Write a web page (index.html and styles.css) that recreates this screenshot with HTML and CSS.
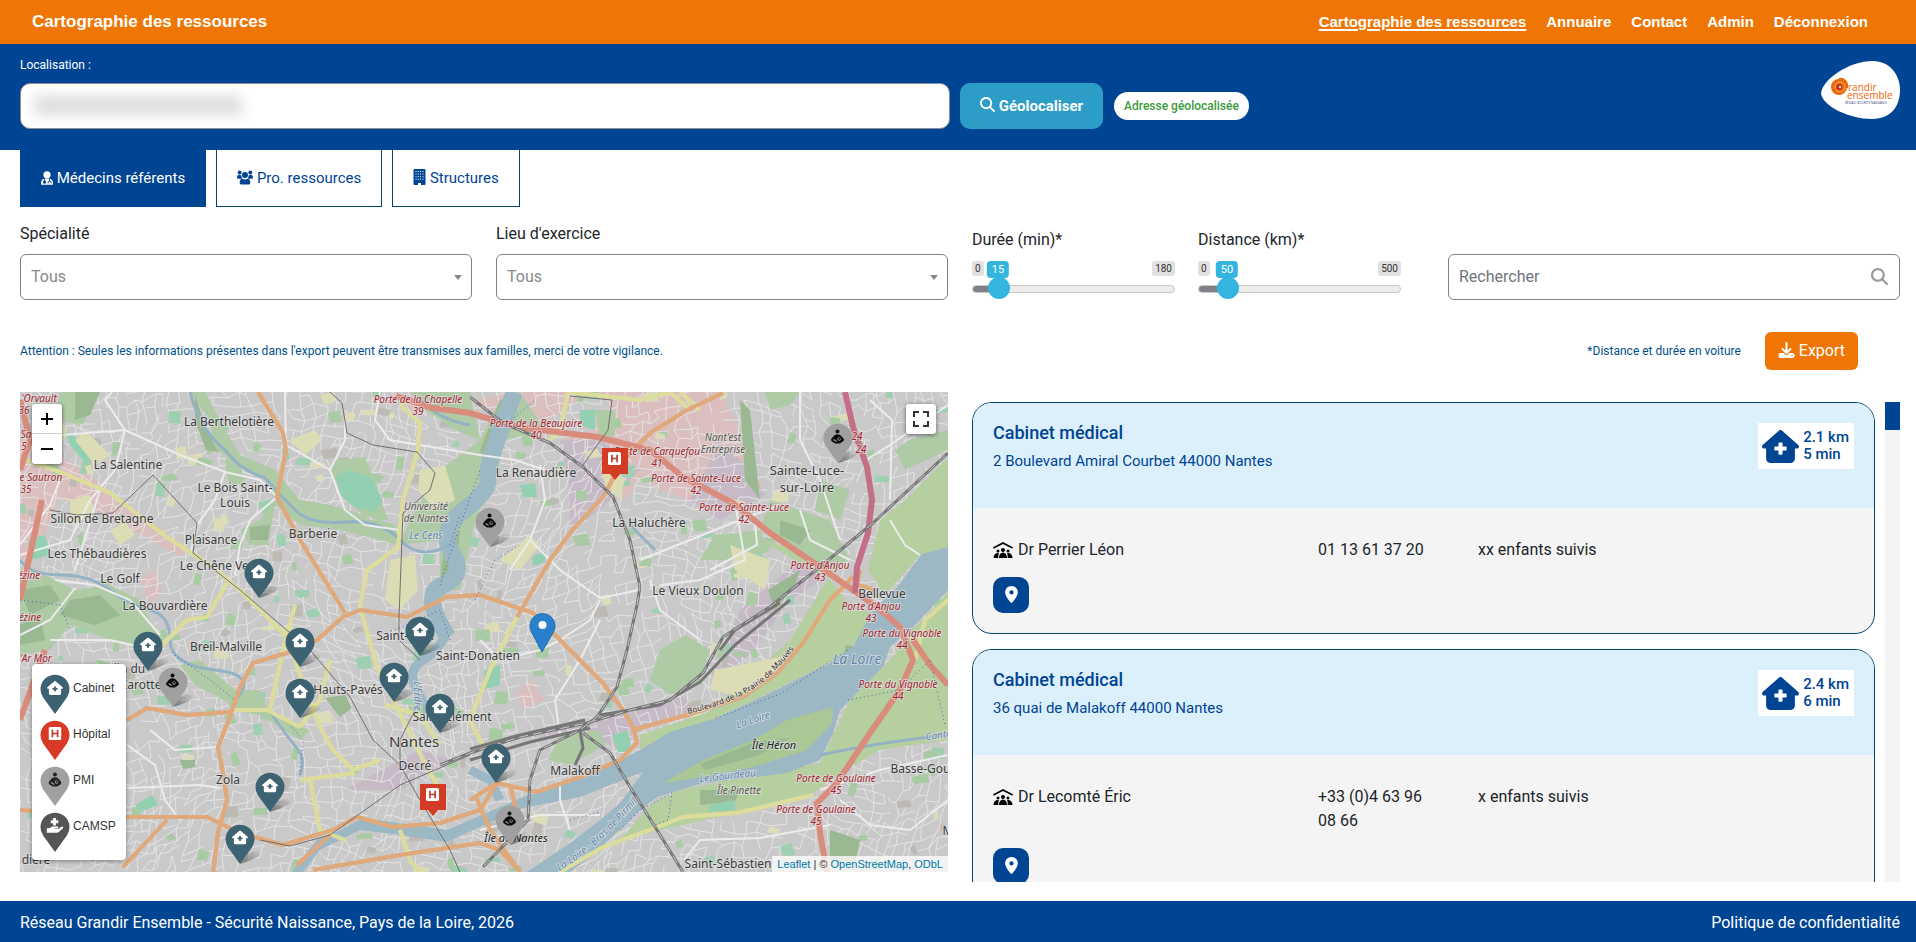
FILE: index.html
```html
<!DOCTYPE html>
<html lang="fr">
<head>
<meta charset="utf-8">
<title>Cartographie des ressources</title>
<link rel="stylesheet" href="styles.css">
</head>
<body>
<svg class="sprite" width="0" height="0" aria-hidden="true">
  <symbol id="i-search" viewBox="0 0 512 512"><path d="M416 208c0 45.900-14.900 88.300-40 122.700L502.600 457.400c12.500 12.500 12.500 32.800 0 45.300s-32.800 12.500-45.300 0L330.700 376c-34.400 25.200-76.800 40-122.700 40C93.100 416 0 322.900 0 208S93.100 0 208 0S416 93.100 416 208zM208 352a144 144 0 1 0 0-288 144 144 0 1 0 0 288z"/></symbol>
  <symbol id="i-pin" viewBox="0 0 384 512"><path d="M215.700 499.200C267 435 384 279.400 384 192C384 86 298 0 192 0S0 86 0 192c0 87.400 117 243 168.300 307.200c12.300 15.300 35.100 15.300 47.400 0zM192 128a64 64 0 1 1 0 128 64 64 0 1 1 0-128z"/></symbol>
  <symbol id="i-download" viewBox="0 0 512 512"><path d="M288 32c0-17.700-14.300-32-32-32s-32 14.300-32 32V274.700l-73.400-73.400c-12.500-12.500-32.800-12.500-45.300 0s-12.500 32.800 0 45.300l128 128c12.500 12.500 32.800 12.500 45.300 0l128-128c12.500-12.500 12.500-32.800 0-45.300s-32.800-12.500-45.300 0L288 274.700V32zM64 352c-35.300 0-64 28.700-64 64v32c0 35.300 28.700 64 64 64H448c35.300 0 64-28.700 64-64V416c0-35.300-28.700-64-64-64H346.500l-45.300 45.300c-25 25-65.500 25-90.500 0L165.500 352H64zm368 56a24 24 0 1 1 0 48 24 24 0 1 1 0-48z"/></symbol>
  <symbol id="i-house" viewBox="0 0 576 512"><path d="M543.800 287.600c17 0 32-14 32-32.100c1-9-3-17-11-24L309.500 7c-6-5-14-7-21-7s-15 1-22 8L10 231.500c-7 7-10 15-10 24c0 18 14 32.100 32 32.100h32V448c0 35.300 28.700 64 64 64H448.500c35.500 0 64.200-28.800 64-64.300l-.7-160.200h32zM256 208c0-8.800 7.200-16 16-16h32c8.800 0 16 7.200 16 16v48h48c8.800 0 16 7.200 16 16v32c0 8.800-7.200 16-16 16H320v48c0 8.800-7.200 16-16 16H272c-8.800 0-16-7.200-16-16V320H208c-8.800 0-16-7.200-16-16V272c0-8.800 7.200-16 16-16h48V208z"/></symbol>
  <symbol id="i-doctor" viewBox="0 0 14 16"><path fill-rule="evenodd" d="M7 0a4 4 0 1 1 0 8.400a4 4 0 0 1 0-8.400zM3.600 8.800V11A1.800 1.800 0 0 0 2.400 13a1.800 1.800 0 0 0 3.600 0A1.800 1.800 0 0 0 4.600 11V8.600h5v2.600l-1.800 1.600v1.700h.9v-1.300l1.300-1.200 1.300 1.200v1.300h.9v-1.700l-1.700-1.600V8.800c2.200.5 3.500 2.400 3.500 4.700V15a1 1 0 0 1-1 1H1a1 1 0 0 1-1-1v-1.500c0-2.300 1.400-4.200 3.600-4.700z"/></symbol>
  <symbol id="i-users" viewBox="0 0 18 16"><circle cx="3" cy="2.400" r="2.200"/><circle cx="15" cy="2.400" r="2.200"/><circle cx="9" cy="5.200" r="3.400"/><path d="M0 8C0 6.200 1 5 2.500 5c1 0 1.800.3 2.500 1A4.800 4.800 0 0 0 6 9L5 9.400H1.600C.6 9.400 0 9 0 8zM18 8c0-1.800-1-3-2.500-3-1 0-1.800.3-2.500 1A4.800 4.800 0 0 1 12 9l1 .4h3.400c1 0 1.600-.4 1.600-1.400zM3 13.500c0-2.600 1.200-4.200 3-4.200 2 1.200 4 1.200 6 0 1.800 0 3 1.600 3 4.200C15 15 14 16 12.700 16H5.300C4 16 3 15 3 13.500z"/></symbol>
  <symbol id="i-building" viewBox="0 0 12 16"><path fill-rule="evenodd" d="M1 0h10A1 1 0 0 1 12 1v14a1 1 0 0 1-1 1H7.500v-2h-3V16H1A1 1 0 0 1 0 15V1A1 1 0 0 1 1 0zM2 2v1h1V2zm2.300 0v1h1V2zm2.300 0v1h1V2zM9 2v1h1V2zM2 4.600v1h1v-1zm2.300 0v1h1v-1zm2.300 0v1h1v-1zM9 4.600v1h1v-1zM2 7.200v1h1v-1zm2.300 0v1h1v-1zm2.300 0v1h1v-1zM9 7.200v1h1v-1zM2 9.800v1h1v-1zm2.300 0v1h1v-1zm2.300 0v1h1v-1zM9 9.800v1h1v-1z"/></symbol>
  <symbol id="i-roof" viewBox="0 0 20 16"><path d="M10 0L0 5.200l.7 1.500L10 2l9.300 4.700.7-1.500z"/><circle cx="10" cy="8" r="2"/><circle cx="5" cy="9" r="1.500"/><circle cx="15" cy="9" r="1.500"/><path d="M6 16c0-3.400 1.600-5.500 4-5.500s4 2.100 4 5.500zM.5 16c0-3 1.700-5 4.500-5l1 .3C5.300 12.500 5.300 14 5.300 16zM19.500 16c0-3-1.700-5-4.500-5l-1 .3c.7 1.200.7 2.700.7 4.700z"/></symbol>
  <symbol id="i-child" viewBox="0 0 14 15"><circle cx="7" cy="2.100" r="2.100"/><path fill-rule="evenodd" d="M7 5c2 0 3.200.8 4.300 2.300l2.200 2.500c.9 1.200.4 2.600-.8 3.200L9.500 15h-5l-3.200-2C.100 12.400-.4 11 .5 9.800l2.200-2.500C3.800 5.800 5 5 7 5zM8.700 8.200a1.900 1.900 0 1 0 0 3.800 1.900 1.900 0 1 0 0-3.800zM3.200 10.300l-.8.900 3.400 2.200.6-1z"/><circle cx="8.900" cy="10" r="1.100"/></symbol>
  <symbol id="i-hospital" viewBox="0 0 14 14"><rect width="14" height="14" rx="2" fill="#fff"/><path d="M4.200 3v8M9.800 3v8M4.200 7h5.600" stroke="#b93a2d" stroke-width="1.800" fill="none"/></symbol>
  <symbol id="i-hand" viewBox="0 0 18 16"><path d="M7 0h3v2.500h2.500v3H10V8H7V5.500H4.500v-3H7zM0 11h3c1.500-1.600 3-2 4.500-2h4c1.500 0 1.500 2 0 2.200H8.500v.6h4L16 9.300c1.300-.8 2.600.6 1.500 1.700L13 15c-.5.500-1.200.7-2 .7H0z"/></symbol>
</svg>

<header class="topbar">
  <a class="brand" href="#">Cartographie des ressources</a>
  <nav class="nav">
    <a class="nav-link current" href="#">Cartographie des ressources</a>
    <a class="nav-link" href="#">Annuaire</a>
    <a class="nav-link" href="#">Contact</a>
    <a class="nav-link" href="#">Admin</a>
    <a class="nav-link" href="#">Déconnexion</a>
  </nav>
</header>

<section class="locate">
  <form class="locate-form">
    <label class="locate-label" for="address">Localisation :</label>
    <div class="locate-row">
      <div class="address"><input class="address-input" id="address" type="text"><span class="redacted"></span></div>
      <button class="geo-btn" type="button"><svg width="15" height="15"><use href="#i-search"/></svg> Géolocaliser</button>
      <span class="geo-ok">Adresse géolocalisée</span>
    </div>
  </form>
  <svg class="logo" viewBox="0 0 79 58" role="img" aria-label="Grandir ensemble">
    <path d="M0 32C2 18 28 0 52 0c17 0 27 14 27 29S71 58 51 58C28 58 1 45 0 32z" fill="#fff"/>
    <circle cx="18" cy="26" r="8" fill="#ec6608"/><circle cx="19" cy="26" r="5" fill="none" stroke="#f7b27a"/><circle cx="18" cy="26" r="3" fill="#c8321e"/><circle cx="19" cy="26" r="1" fill="#fff"/><path d="M18 18c5-1 9 3 8 9" fill="none" stroke="#ec6608" stroke-width="2"/>
    <text class="logo-name" x="27" y="30">randir</text><text class="logo-name" x="26" y="38">ensemble</text><text class="logo-sub" x="24" y="43">RÉSEAU SÉCURITÉ NAISSANCE</text>
  </svg>
</section>

<main class="main">
  <div class="tabs">
    <button class="tab active" type="button"><svg width="12" height="14"><use href="#i-doctor"/></svg> Médecins référents</button>
    <button class="tab" type="button"><svg width="16" height="15"><use href="#i-users"/></svg> Pro. ressources</button>
    <button class="tab" type="button"><svg width="13" height="16"><use href="#i-building"/></svg> Structures</button>
  </div>

  <form class="filters">
    <div class="field"><label for="spec">Spécialité</label><div class="select-box"><select id="spec" class="control"><option>Tous</option></select></div></div>
    <div class="field"><label for="lieu">Lieu d'exercice</label><div class="select-box"><select id="lieu" class="control"><option>Tous</option></select></div></div>
    <div class="sliders">
      <div class="slider">
        <label for="duree">Durée (min)*</label>
        <div class="scale"><span class="tick">0</span><output class="value" style="left:26px">15</output><span class="tick">180</span></div>
        <input class="range" id="duree" type="range" min="0" max="180" value="15">
      </div>
      <div class="slider">
        <label for="dist">Distance (km)*</label>
        <div class="scale"><span class="tick">0</span><output class="value" style="left:29px">50</output><span class="tick">500</span></div>
        <input class="range" id="dist" type="range" min="0" max="500" value="50">
      </div>
    </div>
    <div class="search"><input class="control" type="text" placeholder="Rechercher" aria-label="Rechercher"><svg class="search-icon" width="17" height="17"><use href="#i-search"/></svg></div>
  </form>

  <div class="notice">
    <p>Attention : Seules les informations présentes dans l'export peuvent être transmises aux familles, merci de votre vigilance.</p>
    <div class="notice-end">
      <p>*Distance et durée en voiture</p>
      <button class="export" type="button"><svg width="17" height="16"><use href="#i-download"/></svg> Export</button>
    </div>
  </div>

  <div class="results">
    <div class="map">
      <svg class="tiles" viewBox="20 392 928 480" preserveAspectRatio="xMidYMid slice">
        <defs>
          <linearGradient id="shade" x1="0" x2="1" y1="1" y2="0"><stop offset="0" stop-color="#222" stop-opacity=".55"/><stop offset="1" stop-color="#222" stop-opacity="0"/></linearGradient>
          <path id="mauves" d="M688 714C728 705 758 690 774 672C784 661 792 653 800 640"/>
          <path id="pirmil" d="M559 871C590 854 618 824 642 796"/>
          <g id="m-cab"><path d="M0 0L8-11Q22-16 20-9Q14-4 0 0z" fill="url(#shade)"/><path d="M0 0L-11.900-16.500A14.500 14.500 0 1 1 11.900-16.500z" fill="#3d6373"/><use href="#i-house" x="-8" y="-33.500" width="16" height="14" fill="#fff"/></g>
          <g id="m-pmi"><path d="M0 0L8-11Q22-16 20-9Q14-4 0 0z" fill="url(#shade)"/><path d="M0 0L-11.900-16.500A14.500 14.500 0 1 1 11.900-16.500z" fill="#a0a0a0"/><use href="#i-child" x="-7" y="-34" width="13" height="15" fill="#0a0a0a"/></g>
          <g id="m-hop"><path d="M-13-32H13V-6H5L0 0L-5-6H-13z" fill="#d33b25"/><use href="#i-hospital" x="-7" y="-28" width="13" height="13"/></g>
        </defs>
        <rect x="20" y="392" width="928" height="480" fill="#cac9ca"/>
        <g class="zone-retail">
          <path d="M20 440L60 455L90 475L190 550L180 556L100 512L58 498L40 550L20 560zM530 392L720 392L745 440L765 495L720 520L690 500L660 490L640 478L625 500L590 470L560 440L595 430L610 400z"/>
          <path d="M470 400L515 392L590 392L550 420L520 425zM140 580L155 570L162 590L150 605zM515 695L530 680L545 700L525 708zM400 395L480 410L480 418L410 410z"/>
        </g>
        <g class="zone-work"><path d="M570 490L560 440L600 440L640 470L600 510L570 530zM530 737L600 720L680 695L700 710L640 730L620 750L590 735zM690 500L720 440L750 470L765 495L720 520zM345 790L420 750L450 760L400 790zM740 610L800 560L830 575L790 600L750 655L710 680z"/></g>
        <path id="streets" class="street-fine" d=""/>
        <g id="plots"></g>
        <g class="farmland"><path d="M760 540L830 580L850 605L800 660L770 690L700 720L790 640L840 560zM880 520L905 500L948 458L948 548L920 555L885 595L868 570zM840 610L875 612L850 650L820 668L730 712L640 750L640 735L700 715L775 685L805 645zM948 592L948 740L880 750L845 770L810 795L740 812L660 830L622 838L650 805L680 790L820 763L850 700L890 660L915 628z"/></g>
        <g class="green">
          <path d="M20 580L45 575L75 590L110 585L140 600L150 620L165 640L150 650L110 640L70 625L50 650L20 655zM60 392L88 392L80 425L55 420zM190 392L210 420L215 450L235 460L265 480L275 500L260 520L240 530L250 545L268 545L275 505L300 525L340 530L400 545L395 525L330 505L300 500L275 470L240 455L225 430L205 392zM330 470L335 460L365 457L378 490L388 520L370 520L345 500zM440 470L480 440L500 400L520 392L545 430L505 440L498 470L475 520L460 590L440 590L440 540L400 545L410 520zM180 665L200 660L235 690L260 690L270 715L310 730L300 740L260 715L232 710L225 700L195 685zM715 535L760 530L770 550L750 560L700 560zM770 500L830 520L850 560L820 570L790 545L760 530zM660 650L685 635L710 650L700 680L670 695L650 680zM560 735L600 730L605 745L570 765L548 760zM820 480L850 490L840 520L815 510zM895 450L910 440L948 430L948 450L905 470zM765 392L800 392L790 405L770 410z"/>
          <path d="M410 392L470 392L480 440L455 430L425 410zM225 460L235 450L245 480L230 490zM595 410L615 410L615 435L600 440z"/>
        </g>
        <g class="woods"><path d="M20 590L50 585L60 600L30 615zM70 600L100 595L120 615L95 625L60 615zM75 392L100 392L90 415L75 420zM195 395L205 425L218 452L206 450L195 420zM445 545L460 530L455 580L440 580zM480 450L500 400L510 395L500 440L490 470zM740 400L750 410L760 500L745 480zM780 520L810 530L800 545L780 535zM700 760L780 740L830 710L820 725L760 760L690 775zM700 790L740 790L735 802L700 805zM845 645L880 650L860 690L845 690zM250 527L270 525L268 540L250 540zM325 698L345 695L352 708L340 717zM180 760L195 760L195 767L183 769zM20 625L40 615L45 640L20 645zM830 830L860 840L855 865L830 860zM768 590L800 570L795 585L775 610z"/></g>
        <g class="sport"><path d="M336 475L350 470L372 478L382 500L375 512L355 507L340 495zM65 432L78 438L92 460L85 463L70 445zM580 410L595 410L595 430L580 425zM520 485L535 483L537 497L523 497zM532 556L545 552L545 562L533 566zM135 805L152 795L158 805L140 812zM612 735L628 730L632 752L618 752zM710 805L735 800L735 810L708 812zM28 540L45 535L50 555L30 560zM485 670L500 665L500 685L482 690zM740 557L762 553L765 567L745 570z"/></g>
        <g class="sand"><path d="M85 430L110 455L95 465L75 440zM70 500L90 495L95 515L70 525zM290 440L315 430L322 440L305 455zM110 530L125 522L135 535L120 545zM390 560L415 555L418 590L400 610L385 600zM600 465L625 478L620 500L605 485zM420 470L445 465L455 500L435 510L418 490zM710 690L715 670L790 655L770 675L735 695zM500 560L530 535L540 545L520 570zM320 395L335 392L335 402L325 405zM730 545L770 560L765 590L735 570z"/></g>
        <g class="river">
          <path d="M948 547L922 554L895 590L873 610L853 647L830 663L770 693L717 718L670 732L640 750L587 777L523 797L447 830L427 827L363 818L340 830L317 840L297 864L293 872L303 872L320 850L360 830L400 835L447 842L523 808L580 797L643 772L620 803L600 820L570 843L527 872L570 872L590 857L620 830L637 813L657 797L703 783L747 778L787 773L820 760L833 733L840 710L883 667L890 647L913 627L948 590z"/>
          <path class="erdre" d="M514 392Q508 410 497 440T488 480T464 510T452 553T443 585T448 637"/>
          <path class="erdre-low" d="M448 630Q440 650 423 660T417 690T423 710M470 770L490 780L500 800"/>
          <path class="stream" d="M190 392Q200 430 225 450Q240 470 265 478Q280 495 295 510T345 522T400 540T450 545M20 560Q30 575 60 575T110 590T150 610T170 640T215 670T235 700M270 712Q290 740 298 750T300 775M420 400Q440 420 470 425M820 755Q880 742 948 735M630 525L655 550"/>
        </g>
        <path class="isle" d="M663 783L703 760L753 740L787 720L833 707L832 723L807 750L753 767L703 777z"/>
        <path class="woods" d="M700 764L755 742L790 738L760 755L705 770z"/>
        <g class="street-mid"><path d="M62 435L125 430L180 455L225 472L260 480L277 497M125 430L105 400L112 392M125 430L115 470L90 500L70 540L20 555M277 497L250 520L240 545L235 575M286 445L330 470L345 510L365 525L400 530M330 470L345 440L345 420M286 450L285 392M225 472L215 500L197 525M197 525L190 555M20 545L50 505L60 480M75 588L50 620L20 635M55 580L95 585L130 600L160 635M50 640L110 640L155 650M100 490L75 570M127 745L155 765L165 800L180 820M127 788L200 785L220 788M150 730L175 750L218 747M480 455L515 460L545 470M540 465L545 500L530 540L510 570M530 540L560 570L600 598L640 590M640 560L690 540L740 520L780 505M700 640L660 610L650 580M735 503L745 560L700 580L660 585M755 520L757 545L710 570M800 510L810 540L850 560M800 392L800 440L820 480L840 540M890 520L905 545L920 555M890 500L892 420L870 400M866 460L890 445L948 405M684 860L700 840L760 838L830 825M820 790L880 770L948 755M560 640L590 620L600 600M480 640L500 660L540 650L560 640M560 735L555 700L580 660L600 620M560 780L560 800L570 830M480 830L540 815L600 815M840 800L870 825L910 830L948 800M380 392L375 420L390 440L480 455"/></g>
        <g class="casing"><use href="#roads-o"/><use href="#roads-y"/></g>
        <g id="roads-y" class="road-y"><path d="M400 397L403 408L420 423L418 450L403 500L398 547L367 570L360 607L377 667L400 713L423 760L440 790M20 458L63 473L110 493L167 537L213 567L243 593L290 640L297 667L320 727L333 750L353 770L380 760M227 583L207 617L187 620L160 647M233 710L267 710L300 727M300 727L320 700L330 660M385 705L420 715L440 745M300 780L355 773M310 780L320 830L345 840M400 830L410 860L420 872M560 872L603 847L650 830L683 817L737 813L813 795M568 392L560 430L550 440M568 392L640 400L670 392L690 410M517 617L490 670L470 720M470 720L490 760M295 605L283 650L270 710M915 660L925 620L948 600M680 392L700 410"/></g>
        <g id="roads-o" class="road-o"><path d="M258 392L283 433L286 450L277 497L300 540L345 613M480 595L447 597L407 617L360 610L343 617L317 640L287 653L253 663L240 687L230 717L218 747L223 773L227 800L218 833L213 872M480 595L533 613L553 633L603 683L623 710L633 727L637 743L620 760L580 777L537 792L497 783L470 800M127 720L147 708L187 715L230 712M633 730L687 715L743 697L777 673L803 643L830 600L853 577M723 393L687 410L650 433L623 460L603 497L570 533L550 560L517 617M20 810L127 817L207 817L240 833L283 845L333 830L357 817L393 827L440 823L480 810L497 783M167 820L123 867M313 870L400 855L480 843L500 850L520 872M475 795L490 830L520 872M510 785L520 825M297 865L330 835M860 570L857 585L875 590"/></g>
        <g class="road-r"><path d="M396 396L433 408L470 413L517 427L597 437L650 450L683 477L733 503L770 533L820 567L877 607L900 627L913 660L900 690L870 733L837 783L817 803L820 833L827 872M913 640L930 665L948 685M20 470L30 440L20 400M42 500L20 600M45 650L20 720"/></g>
        <path class="road-m" d="M845 392L853 427L867 467L872 500L868 533L857 567L855 593"/>
        <g class="rail-thin"><path d="M330 392L342 403L347 433L373 445L417 452L435 473L430 490L403 513L399 617L399 640L420 660M50 510L77 515L113 513L153 475L197 523L193 553L240 590L275 620L310 650L350 697L373 740L400 765L420 800L450 850L460 872M612 400L608 430L583 465M612 400L570 396M400 765L400 740L420 700M260 840L290 846L330 835L400 785L470 755"/></g>
        <g id="rails" class="rail"><path d="M470 397L503 423L550 443L583 467L613 497L630 540L640 587L637 605L627 650L617 687L597 717L580 730L540 750L530 780L528 820L483 867M440 765L470 753L520 737L587 723L630 710L670 700L703 673L723 637L770 607L787 593L820 567L873 523L948 453M583 733L610 753L630 787L657 830L683 872M470 760L530 742L590 728M600 715L660 705L700 682L735 645L790 600"/><path d="M470 749L520 735L585 720M720 650L735 630L780 603M580 730L583 748L575 765"/></g>
        <path class="rail-core" d="M470 397L503 423L550 443L583 467L613 497L630 540L640 587L637 605L627 650L617 687L597 717L580 730L540 750L530 780L528 820L483 867M440 765L470 753L520 737L587 723L630 710L670 700L703 673L723 637L770 607L787 593L820 567L873 523L948 453M583 733L610 753L630 787L657 830L683 872"/>
        <g class="ways"><path d="M20 600L60 605L70 630M440 585L455 540L480 470M505 425L535 400M620 830L640 810L672 793L668 820L655 825M716 718L780 694L848 650M848 700L900 690L930 660L945 725M175 655L210 680L235 700M570 820L600 812M475 600L495 560L520 545M300 775L303 740L290 725M395 630L440 610L450 640M450 545L460 515"/></g>

        <g class="place">
          <text x="229" y="426">La Berthelotière</text><text x="128" y="469">La Salentine</text><text x="235" y="492">Le Bois Saint-</text><text x="235" y="507">Louis</text><text x="102" y="523">Sillon de Bretagne</text><text x="211" y="544">Plaisance</text><text x="313" y="538">Barberie</text><text x="97" y="558">Les Thébaudières</text><text x="219" y="570">Le Chêne Vert</text><text x="120" y="583">Le Golf</text><text x="165" y="610">La Bouvardière</text><text x="226" y="651">Breil-Malville</text><text x="405" y="640">Saint-Félix</text><text x="478" y="660">Saint-Donatien</text><text x="348" y="694">Hauts-Pavés</text><text x="452" y="721">Saint-Clément</text><text x="415" y="770">Decré</text><text x="228" y="784">Zola</text><text x="575" y="775">Malakoff</text><text x="536" y="477">La Renaudière</text><text x="649" y="527">La Haluchère</text><text x="698" y="595">Le Vieux Doulon</text><text x="882" y="598">Bellevue</text><text x="934" y="773">Basse-Goulaine</text><text x="962" y="835">Moulin</text><text x="728" y="868">Saint-Sébastien</text><text x="120" y="673">Jardin du</text><text x="148" y="689">Carotterie</text><text x="36" y="864">dière</text>
        </g>
        <g class="place town"><text x="807" y="475">Sainte-Luce-</text><text x="807" y="492">sur-Loire</text></g>
        <text class="place city" x="414" y="747">Nantes</text>
        <g class="exit">
          <text x="418" y="403">Porte de la Chapelle</text><text x="418" y="415">39</text><text x="39" y="402">'Orvault</text><text x="24" y="414">36</text><text x="26" y="438">Sa</text><text x="24" y="450">5</text><text x="38" y="481">de Sautron</text><text x="26" y="493">35</text><text x="29" y="579">ézine</text><text x="30" y="621">ézine</text><text x="36" y="662">'Ar Mor</text>
          <text x="536" y="427">Porte de la Beaujoire</text><text x="536" y="439">40</text><text x="657" y="455">Porte de Carquefou</text><text x="657" y="467">41</text><text x="696" y="482">Porte de Sainte-Luce</text><text x="696" y="494">42</text><text x="744" y="511">Porte de Sainte-Luce</text><text x="744" y="523">42</text><text x="820" y="569">Porte d'Anjou</text><text x="820" y="581">43</text><text x="871" y="610">Porte d'Anjou</text><text x="871" y="622">43</text><text x="857" y="440">24</text><text x="861" y="453">24</text><text x="902" y="637">Porte du Vignoble</text><text x="902" y="649">44</text><text x="898" y="688">Porte du Vignoble</text><text x="898" y="700">44</text><text x="836" y="782">Porte de Goulaine</text><text x="836" y="794">45</text><text x="816" y="813">Porte de Goulaine</text><text x="816" y="825">45</text>
        </g>
        <g class="site"><text x="426" y="510">Université</text><text x="426" y="522">de Nantes</text><text x="723" y="441">Nant'est</text><text x="723" y="453">Entreprise</text><text x="739" y="794">Île Pinette</text></g>
        <g class="isle-name"><text x="774" y="749">Île Héron</text><text x="516" y="842">Île de Nantes</text></g>
        <g class="water-name"><text x="426" y="539">Le Cens</text><text class="big" x="857" y="664">La Loire</text><text transform="translate(754 723) rotate(-18)">La Loire</text><text transform="translate(728 779) rotate(-6)">Le Gourdeau</text><text transform="translate(942 738) rotate(-8)">Canton</text><text transform="translate(414 696) rotate(90)">L'Erdre</text><text class="along"><textPath href="#pirmil">La Loire - Bras de Pirmil</textPath></text></g>
        <text class="road-name"><textPath href="#mauves">Boulevard de la Prairie de Mauves</textPath></text>

        <g>
          <use href="#m-pmi" x="838" y="463"/><use href="#m-hop" x="615" y="480"/><use href="#m-pmi" x="490" y="547"/><use href="#m-cab" x="259" y="598"/>
          <path d="M542 652L531 631A12.500 12.500 0 1 1 554 631z" fill="#2a81cb" stroke="#1e6fb3"/><circle cx="542.500" cy="625" r="4" fill="#fff"/>
          <use href="#m-cab" x="420" y="656"/><use href="#m-cab" x="300" y="667"/><use href="#m-cab" x="148" y="671"/><use href="#m-cab" x="394" y="702"/><use href="#m-pmi" x="173" y="707"/><use href="#m-cab" x="300" y="718"/><use href="#m-cab" x="440" y="733"/><use href="#m-cab" x="496" y="783"/><use href="#m-cab" x="270" y="812"/><use href="#m-hop" x="433" y="816"/><use href="#m-pmi" x="510" y="845"/><use href="#m-cab" x="240" y="864"/>
        </g>
      </svg>
      <div class="zoom"><button type="button" aria-label="Zoom avant"><svg width="14" height="14"><path d="M7 1v12M1 7h12"/></svg></button><button type="button" aria-label="Zoom arrière"><svg width="14" height="14"><path d="M1 7h12"/></svg></button></div>
      <button class="full" type="button" aria-label="Plein écran"><svg width="16" height="16"><path d="M1 6V1H6M10 1H15V6M15 10V15H10M6 15H1V10"/></svg></button>
      <ul class="legend">
        <li><svg width="32" height="42" viewBox="-16 -41 32 42"><path fill="#3d6373" d="M0 0L-11.900-16.500A14.500 14.500 0 1 1 11.900-16.500z"/><use href="#i-house" x="-8" y="-33" width="16" height="14" fill="#fff"/></svg>Cabinet</li>
        <li><svg width="32" height="42" viewBox="-16 -41 32 42"><path fill="#d83a26" d="M0 0L-11.900-16.500A14.500 14.500 0 1 1 11.900-16.500z"/><use href="#i-hospital" x="-6.500" y="-33" width="13" height="13"/></svg>Hôpital</li>
        <li><svg width="32" height="42" viewBox="-16 -41 32 42"><path fill="#a0a0a0" d="M0 0L-11.900-16.500A14.500 14.500 0 1 1 11.900-16.500z"/><use href="#i-child" x="-6.500" y="-34" width="13" height="15" fill="#222"/></svg>PMI</li>
        <li><svg width="32" height="42" viewBox="-16 -41 32 42"><path fill="#555" d="M0 0L-11.900-16.500A14.500 14.500 0 1 1 11.900-16.500z"/><use href="#i-hand" x="-8.500" y="-34" width="17" height="15" fill="#fff"/></svg>CAMSP</li>
      </ul>
      <div class="credit"><a href="#">Leaflet</a> | © <a href="#">OpenStreetMap</a>, <a href="#">ODbL</a></div>
    </div>

    <div class="list-pane">
      <div class="list">
        <article class="card">
          <div class="card-head"><div><h2>Cabinet médical</h2><p>2 Boulevard Amiral Courbet 44000 Nantes</p></div>
            <div class="trip"><svg width="37" height="33"><use href="#i-house"/></svg><span>2.1 km<br>5 min</span></div></div>
          <div class="card-body">
            <div class="person"><div class="name"><svg width="20" height="16"><use href="#i-roof"/></svg>Dr Perrier Léon</div><div class="phone">01 13 61 37 20</div><div>xx enfants suivis</div></div>
            <button class="pin-btn" type="button" aria-label="Voir sur la carte"><svg width="13" height="17"><use href="#i-pin"/></svg></button>
          </div>
        </article>
        <article class="card">
          <div class="card-head"><div><h2>Cabinet médical</h2><p>36 quai de Malakoff 44000 Nantes</p></div>
            <div class="trip"><svg width="37" height="33"><use href="#i-house"/></svg><span>2.4 km<br>6 min</span></div></div>
          <div class="card-body">
            <div class="person"><div class="name"><svg width="20" height="16"><use href="#i-roof"/></svg>Dr Lecomté Éric</div><div class="phone">+33 (0)4 63 96 08 66</div><div>x enfants suivis</div></div>
            <button class="pin-btn" type="button" aria-label="Voir sur la carte"><svg width="13" height="17"><use href="#i-pin"/></svg></button>
          </div>
        </article>
      </div>
      <div class="scrollbar"><div class="thumb"></div></div>
    </div>
  </div>
</main>

<footer class="footer"><span>Réseau Grandir Ensemble - Sécurité Naissance, Pays de la Loire, 2026</span><a href="#">Politique de confidentialité</a></footer>
<script src="map.js"></script>
</body>
</html>
```
FILE: map.js
```js
// Minor streets and small plots of the base map, from a fixed seed.
(function () {
  var seed = 7;
  function rnd() { seed = (seed * 16807) % 2147483647; return seed / 2147483647; }
  var step = 10, cols = 100, rows = 54, pts = [];
  for (var j = 0; j < rows; j++) {
    pts.push([]);
    for (var i = 0; i < cols; i++) {
      var x = i * step, y = 370 + j * step;
      pts[j].push([
        Math.round(x + 16 * Math.sin(y / 55) + 9 * Math.sin(x / 38 + y / 70) + (rnd() - 0.5) * 7),
        Math.round(y + 18 * Math.sin(x / 62) + 7 * Math.cos(x / 30 - y / 48) + (rnd() - 0.5) * 7)
      ]);
    }
  }
  var d = '';
  for (j = 0; j < rows - 1; j++) {
    for (i = 0; i < cols - 1; i++) {
      var p = pts[j][i];
      if (rnd() < 0.7) d += 'M' + p + 'L' + pts[j][i + 1];
      if (rnd() < 0.66) d += 'M' + p + 'L' + pts[j + 1][i];
    }
  }
  document.getElementById('streets').setAttribute('d', d);

  var kinds = ['plot-a', 'plot-b', 'plot-c', 'plot-a', 'plot-d'], group = document.getElementById('plots');
  for (var n = 0; n < 330; n++) {
    var a = pts[Math.floor(rnd() * (rows - 1))][Math.floor(rnd() * (cols - 1))];
    var w = 4 + rnd() * 12, h = 4 + rnd() * 9, s = (rnd() - 0.5) * 8;
    var el = document.createElementNS('http://www.w3.org/2000/svg', 'path');
    el.setAttribute('class', kinds[Math.floor(rnd() * 5)]);
    el.setAttribute('d', 'M' + a + 'l' + w + ' ' + s + 'l' + (-s) + ' ' + h + 'l' + (-w) + ' ' + (-s / 2) + 'z');
    group.appendChild(el);
  }
})();
```
FILE: styles.css
```css
* { box-sizing: border-box; }
body { margin: 0; min-height: 100vh; display: flex; flex-direction: column; background: #fff; color: #212529; font: 16px/24px Roboto, "Liberation Sans", sans-serif; }
p, h2, ul { margin: 0; padding: 0; }
button, input, select { font: inherit; }
a { color: inherit; text-decoration: none; }
.sprite { position: absolute; }

.topbar { display: flex; justify-content: space-between; align-items: center; height: 44px; padding: 0 48px 0 32px; background: #ef7604; color: #fff; font-family: "Liberation Sans", Arial, sans-serif; font-weight: bold; }
.brand { font-size: 17px; line-height: 26px; }
.nav { display: flex; gap: 20px; font-size: 15px; line-height: 20px; }
.current { text-decoration: underline; text-decoration-thickness: 2px; text-underline-offset: 2px; }

.locate { display: flex; justify-content: space-between; align-items: flex-start; height: 106px; padding: 11px 16px 0 20px; background: #004494; }
.locate-form { flex: 1; }
.locate-label { display: block; color: #fff; font-size: 12px; line-height: 20px; margin-bottom: 8px; }
.locate-row { display: flex; align-items: center; }
.address { position: relative; width: 52%; max-width: 930px; margin-right: 10px; }
.address-input { display: block; width: 100%; height: 46px; padding: 0 12px; border: 1px solid #8a8f98; border-radius: 10px; background: #fff; }
.redacted { position: absolute; left: 14px; top: 13px; width: 208px; height: 19px; background: #dcdcdc; filter: blur(7px); }
.geo-btn { height: 46px; padding: 0 20px; border: 0; border-radius: 10px; background: #2c9dc6; color: #fff; font-size: 15px; font-weight: bold; white-space: nowrap; margin-right: 11px; }
.geo-btn svg { vertical-align: -1px; fill: currentColor; }
.geo-ok { padding: 4px 10px; border-radius: 14px; background: #fff; color: #3c9a3c; font-size: 12px; line-height: 20px; font-weight: 500; }
.logo { width: 79px; height: 58px; margin-top: 6px; }
.logo-name { font: 10px "Open Sans", sans-serif; fill: #ec6608; }
.logo-sub { font: 3px "Open Sans", sans-serif; fill: #2b3d6b; }

.main { padding: 0 16px 0 20px; }
.tabs { display: flex; gap: 10px; }
.tab { height: 57px; padding: 0 20px; border: 1px solid #004473; border-top: 0; background: #fff; color: #004494; font-size: 15px; }
.tab.active { background: #004494; border-color: #004494; color: #fff; }
.tab svg { vertical-align: -2px; fill: currentColor; }

.filters { display: grid; grid-template-columns: repeat(4, 1fr); column-gap: 24px; align-items: end; padding-top: 15px; }
.field label, .slider label { display: block; }
.field label { margin-bottom: 8px; }
.control { display: block; width: 100%; height: 46px; padding: 0 11px; border: 1px solid #808080; border-radius: 6px; background: #fff; color: #888; appearance: none; }
select.control { padding-left: 10px; }
.select-box, .search { position: relative; }
.select-box::after { content: ""; position: absolute; right: 10px; top: 21px; border: 4px solid transparent; border-top: 5px solid #888; border-bottom: 0; }
.search .control { padding: 0 40px 1px 10px; }
.search .control::placeholder { color: #6c757d; opacity: 1; }
.search-icon { position: absolute; right: 12px; top: 14px; fill: #999; }
.sliders { display: grid; grid-template-columns: 1fr 1fr; }
.slider { padding-right: 23px; }
.slider label { margin-bottom: 9px; }
.scale { position: relative; display: flex; justify-content: space-between; align-items: flex-start; height: 17px; font-size: 10px; line-height: 15px; }
.tick { padding: 0 3px; border-radius: 3px; background: #e1e1e1; color: #333; }
.value { position: absolute; top: 0; transform: translateX(-50%); padding: 0 5px; border-radius: 4px; background: #33b5e0; color: #fff; font-size: 11px; line-height: 17px; }
.range { display: block; width: 100%; height: 22px; margin: 0; appearance: none; background: none; }
.range::-webkit-slider-runnable-track { height: 8px; border: 1px solid #c8c8c8; border-radius: 4px; background: linear-gradient(90deg, #808087 20px, #ececec 20px); }
.range::-webkit-slider-thumb { appearance: none; width: 22px; height: 22px; margin-top: -9px; border-radius: 50%; background: #33b5e0; }

.notice { display: flex; justify-content: space-between; align-items: center; padding: 32px 42px 0 0; color: #004f8a; font-size: 12px; }
.notice-end { display: flex; align-items: center; gap: 24px; }
.export { height: 38px; padding: 0 13px; border: 0; border-radius: 6px; background: #ef7604; color: #fff; font-size: 16px; }
.export svg { vertical-align: -2px; fill: currentColor; }

.results { display: grid; grid-template-columns: 1fr 1fr; column-gap: 24px; padding: 22px 0 19px; }
.map { position: relative; height: 480px; overflow: hidden; font-family: "Liberation Sans", Arial, sans-serif; }
.tiles { display: block; width: 100%; height: 100%; }
.zone-retail { fill: #dbbfbf; }
.zone-work { fill: #c6bac6; }
.street-fine { fill: none; stroke: #e4e4e4; stroke-width: 1; }
.street-mid { fill: none; stroke: #ececec; stroke-width: 2; }
.farmland { fill: #b5cf9f; }
.green { fill: #aecba6; }
.woods { fill: #9ab993; }
.sport { fill: #93d0b2; }
.sand { fill: #dcddb4; }
.river { fill: #9bb8c4; }
.erdre { fill: none; stroke: #9bb8c4; stroke-width: 17; }
.erdre-low { fill: none; stroke: #9bb8c4; stroke-width: 9; }
.stream { fill: none; stroke: #93b3c4; stroke-width: 3; }
.isle { fill: #abc795; }
.plot-a { fill: #a9cba4; }
.plot-b { fill: #dcddb8; }
.plot-c { fill: #9dcfb0; }
.plot-d { fill: #bdb9b3; }
.casing { fill: none; stroke: #a58f66; stroke-width: 5; }
.road-y { fill: none; stroke: #dcdc9c; stroke-width: 4; }
.road-o { fill: none; stroke: #dfa97c; stroke-width: 4; }
.road-r { fill: none; stroke: #d98c7c; stroke-width: 6; }
.road-m { fill: none; stroke: #c46f86; stroke-width: 6; }
.casing path { stroke-width: 5; stroke: #a58f66; }
.rail-thin { fill: none; stroke: #707070; stroke-width: 1; }
.rail { fill: none; stroke: #777; stroke-width: 3; stroke-linejoin: round; }
.rail-core { fill: none; stroke: #c8c8c8; stroke-width: 1; stroke-dasharray: 9 5; }
.ways { fill: none; stroke: #4a5ec0; stroke-width: 1; stroke-dasharray: 1 3; }
.tiles text { paint-order: stroke; stroke: rgba(225, 225, 225, .7); stroke-width: 2px; }
.place { font: 12px "Noto Sans", sans-serif; text-anchor: middle; fill: #3c3c3c; }
.town { font-size: 13px; }
.city { font-size: 15px; }
.exit { font: italic 10px "Noto Sans", sans-serif; text-anchor: middle; fill: #a3242f; }
.site { font: italic 10px "Noto Sans", sans-serif; text-anchor: middle; fill: #5f5a50; }
.isle-name { font: italic 11px "Noto Sans", sans-serif; text-anchor: middle; fill: #222; }
.water-name { font: italic 10px "Noto Sans", sans-serif; text-anchor: middle; fill: #5f87ad; }
.big { font-size: 14px; }
.along { text-anchor: start; }
.road-name { font: 8px "Noto Sans", sans-serif; fill: #3b2a1c; }

.zoom, .full { position: absolute; top: 12px; border: 0; border-radius: 3px; background: #fff; box-shadow: 0 1px 4px rgba(0, 0, 0, .55); }
.zoom { left: 12px; width: 30px; }
.zoom button { display: grid; place-items: center; width: 30px; height: 30px; padding: 0; border: 0; background: none; }
.zoom button:first-child { border-bottom: 1px solid #ccc; }
.zoom path { fill: none; stroke: #000; stroke-width: 2; }
.full { right: 12px; width: 30px; height: 30px; padding: 7px; }
.full svg { display: block; }
.full path { fill: none; stroke: #333; stroke-width: 2; }
.legend { position: absolute; left: 12px; bottom: 12px; width: 94px; padding: 9px 7px 3px; list-style: none; border-radius: 4px; background: #fff; box-shadow: 0 1px 4px rgba(0, 0, 0, .4); color: #333; font-size: 12px; }
.legend li { display: flex; gap: 2px; height: 46px; line-height: 30px; }
.credit { position: absolute; right: 0; bottom: 0; padding: 0 5px; background: rgba(255, 255, 255, .75); color: #333; font-size: 11px; line-height: 16px; }
.credit a { color: #0078a8; }

.list-pane { display: flex; gap: 10px; height: 480px; margin-top: 10px; }
.list { flex: 1; overflow: hidden; }
.card { margin-bottom: 15px; border: 1px solid #004473; border-radius: 20px; overflow: hidden; background: #f4f4f4; }
.card-head { display: flex; justify-content: space-between; align-items: flex-start; height: 105px; padding: 20px; background: #dcf0fc; color: #004494; }
.card h2 { font-size: 18px; line-height: 20px; font-weight: 500; }
.card-head p { font-size: 15px; line-height: 24px; margin-top: 6px; }
.trip { display: flex; align-items: center; gap: 4px; padding: 6px 5px 6px 4px; background: #fff; font-size: 15px; line-height: 17px; font-weight: 500; }
.trip svg { fill: currentColor; }
.card-body { padding: 30px 20px 20px; }
.person { display: grid; grid-template-columns: 325px 160px 1fr; margin-bottom: 15px; }
.name { display: flex; align-items: center; align-self: start; gap: 5px; }
.phone { padding-right: 40px; }
.pin-btn { display: grid; place-items: center; width: 36px; height: 36px; padding: 0 0 2px; border: 0; border-radius: 10px; background: #004494; }
.pin-btn svg { fill: #fff; }
.scrollbar { width: 15px; background: #f4f4f4; }
.thumb { height: 28px; background: #004494; }

.footer { display: flex; justify-content: space-between; align-items: center; flex: 1; min-height: 41px; padding: 2px 16px 0 20px; background: #004494; color: #fff; }
```
